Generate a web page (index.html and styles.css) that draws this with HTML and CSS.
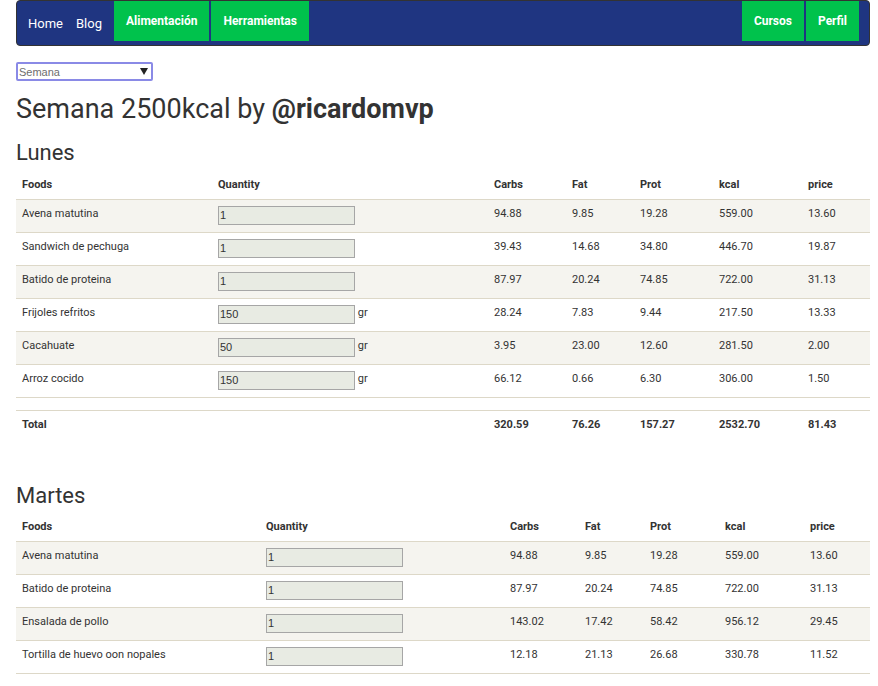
FILE: index.html
```html
<!DOCTYPE html>
<html lang="es">
<head>
<meta charset="utf-8">
<title>Semana 2500kcal</title>
<link rel="stylesheet" href="styles.css">
</head>
<body>
<div class="page">
  <nav class="topnav">
    <a class="plain home" href="#">Home</a>
    <a class="plain" href="#">Blog</a>
    <a class="btn first" href="#">Alimentación</a>
    <a class="btn" href="#">Herramientas</a>
    <span class="spacer"></span>
    <a class="btn" href="#">Cursos</a>
    <a class="btn" href="#">Perfil</a>
  </nav>

  <div class="select-wrap">
    <select class="week"><option>Semana</option></select>
  </div>

  <h1 class="title">Semana 2500kcal by <strong>@ricardomvp</strong></h1>

  <h2 class="day">Lunes</h2>
  <table class="foods lunes">
    <colgroup>
      <col class="c1"><col class="c2"><col class="c3"><col class="c4"><col class="c5"><col class="c6"><col class="c7">
    </colgroup>
    <thead>
      <tr><th>Foods</th><th>Quantity</th><th>Carbs</th><th>Fat</th><th>Prot</th><th>kcal</th><th>price</th></tr>
    </thead>
    <tbody>
      <tr><td>Avena matutina</td><td><input class="qty" value="1"></td><td>94.88</td><td>9.85</td><td>19.28</td><td>559.00</td><td>13.60</td></tr>
      <tr><td>Sandwich de pechuga</td><td><input class="qty" value="1"></td><td>39.43</td><td>14.68</td><td>34.80</td><td>446.70</td><td>19.87</td></tr>
      <tr><td>Batido de proteina</td><td><input class="qty" value="1"></td><td>87.97</td><td>20.24</td><td>74.85</td><td>722.00</td><td>31.13</td></tr>
      <tr><td>Frijoles refritos</td><td><input class="qty" value="150"> gr</td><td>28.24</td><td>7.83</td><td>9.44</td><td>217.50</td><td>13.33</td></tr>
      <tr><td>Cacahuate</td><td><input class="qty" value="50"> gr</td><td>3.95</td><td>23.00</td><td>12.60</td><td>281.50</td><td>2.00</td></tr>
      <tr><td>Arroz cocido</td><td><input class="qty" value="150"> gr</td><td>66.12</td><td>0.66</td><td>6.30</td><td>306.00</td><td>1.50</td></tr>
      <tr class="empty"><td></td><td></td><td></td><td></td><td></td><td></td><td></td></tr>
    </tbody>
    <tfoot>
      <tr><th>Total</th><th></th><th>320.59</th><th>76.26</th><th>157.27</th><th>2532.70</th><th>81.43</th></tr>
    </tfoot>
  </table>

  <h2 class="day">Martes</h2>
  <table class="foods martes">
    <colgroup>
      <col class="c1"><col class="c2"><col class="c3"><col class="c4"><col class="c5"><col class="c6"><col class="c7">
    </colgroup>
    <thead>
      <tr><th>Foods</th><th>Quantity</th><th>Carbs</th><th>Fat</th><th>Prot</th><th>kcal</th><th>price</th></tr>
    </thead>
    <tbody>
      <tr><td>Avena matutina</td><td><input class="qty" value="1"></td><td>94.88</td><td>9.85</td><td>19.28</td><td>559.00</td><td>13.60</td></tr>
      <tr><td>Batido de proteina</td><td><input class="qty" value="1"></td><td>87.97</td><td>20.24</td><td>74.85</td><td>722.00</td><td>31.13</td></tr>
      <tr><td>Ensalada de pollo</td><td><input class="qty" value="1"></td><td>143.02</td><td>17.42</td><td>58.42</td><td>956.12</td><td>29.45</td></tr>
      <tr><td>Tortilla de huevo oon nopales</td><td><input class="qty" value="1"></td><td>12.18</td><td>21.13</td><td>26.68</td><td>330.78</td><td>11.52</td></tr>
    </tbody>
  </table>
</div>
</body>
</html>
```

FILE: styles.css
```css
* { box-sizing: border-box; }

html, body {
  margin: 0;
  padding: 0;
  background: #ffffff;
}

body {
  font-family: Roboto, "Noto Sans", sans-serif;
  color: #333333;
}

.page {
  padding: 0 8px 0 16px;
}

/* ---------- navigation ---------- */
.topnav {
  display: flex;
  align-items: flex-start;
  height: 46px;
  background: #1f3581;
  border: 1px solid #333333;
  border-radius: 4px;
  padding: 0 10px 4px 11px;
}

.topnav a {
  text-decoration: none;
  color: #ffffff;
}

.topnav .plain {
  font-size: 13px;
  line-height: 16px;
  margin-top: 15px;
  margin-right: 12px;
}

.topnav .home {
  margin-right: 13px;
}

.topnav .btn {
  display: block;
  height: 40px;
  background: #00c24c;
  font-size: 12px;
  font-weight: 700;
  line-height: 40px;
  padding: 0 12px;
  margin-right: 2px;
}

.topnav .btn:last-child {
  margin-right: 0;
}

.topnav .spacer {
  flex: 1;
}

/* ---------- week select ---------- */
.select-wrap {
  position: relative;
  width: 137px;
  height: 19px;
  margin-top: 16px;
}

.select-wrap::after {
  content: "";
  position: absolute;
  right: 5px;
  top: 6px;
  border-left: 4px solid transparent;
  border-right: 4px solid transparent;
  border-top: 7px solid #222222;
  pointer-events: none;
}

.week {
  -webkit-appearance: none;
  appearance: none;
  display: block;
  width: 137px;
  height: 19px;
  margin: 0;
  padding: 0 0 0 1px;
  border: 2px solid #8a8ae6;
  border-radius: 2px;
  background: #ffffff;
  font-family: "Liberation Sans", Arial, sans-serif;
  font-size: 11px;
  color: #6e6e6e;
  outline: none;
}

/* ---------- headings ---------- */
.title {
  font-size: 27px;
  font-weight: 400;
  line-height: 30px;
  margin: 13px 0 0 0;
  color: #333333;
}

.title strong {
  font-weight: 700;
}

.day {
  font-size: 22px;
  font-weight: 400;
  line-height: 26px;
  margin: 16px 0 5px 0;
  color: #333333;
}

/* ---------- tables ---------- */
.foods {
  width: 100%;
  border-collapse: collapse;
  table-layout: fixed;
  font-size: 11px;
  line-height: 15.7px;
}

.foods th,
.foods td {
  text-align: left;
  vertical-align: top;
  padding: 6px 6px;
  color: #333333;
}

.foods thead th {
  font-weight: 700;
  border-bottom: 1px solid #ddd8c8;
}

.foods tbody td {
  border-top: 1px solid #ddd8c8;
  height: 33px;
}

.foods tbody tr:nth-child(odd) td {
  background: #f5f4ef;
}

.foods tbody tr.empty td {
  height: 13px;
  background: #ffffff;
  padding: 0;
}

.foods tbody tr:last-child td {
  border-bottom: 1px solid #ddd8c8;
}

.foods tfoot th {
  font-weight: 700;
  height: 33px;
}

.qty {
  display: inline-block;
  vertical-align: top;
  width: 137px;
  height: 19px;
  margin: 0;
  padding: 0 1px;
  border: 1px solid #a6a6a6;
  border-radius: 0;
  background: #e8ebe3;
  font-family: "Liberation Sans", Arial, sans-serif;
  font-size: 11px;
  color: #333333;
  outline: none;
}

/* column widths */
.lunes .c1 { width: 196px; }
.lunes .c2 { width: 276px; }
.lunes .c3 { width: 78px; }
.lunes .c4 { width: 68px; }
.lunes .c5 { width: 79px; }
.lunes .c6 { width: 89px; }
.lunes .c7 { width: 68px; }

.martes .c1 { width: 244px; }
.martes .c2 { width: 244px; }
.martes .c3 { width: 75px; }
.martes .c4 { width: 65px; }
.martes .c5 { width: 75px; }
.martes .c6 { width: 85px; }
.martes .c7 { width: 66px; }

.lunes + .day {
  margin-top: 40px;
  margin-bottom: 4px;
}
```
